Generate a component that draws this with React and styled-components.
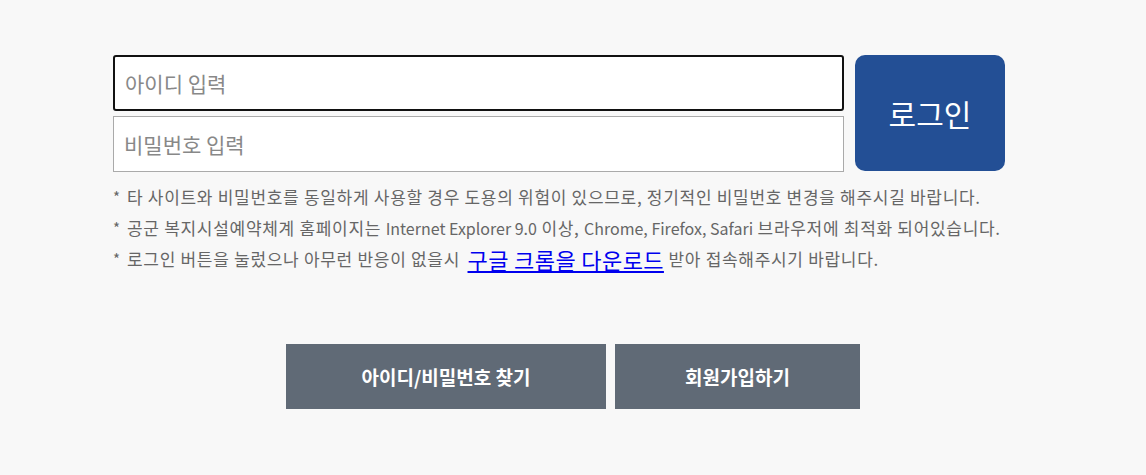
import styled, { createGlobalStyle } from "styled-components";

const GlobalStyle = createGlobalStyle`
  html, body {
    margin: 0;
    padding: 0;
    background: #f8f8f8;
    font-family: "Noto Sans CJK KR", "Noto Sans", sans-serif;
  }
`;

const Page = styled.div`
  width: 920px;
  margin: 0 auto;
  padding-top: 55px;
`;

const LoginRow = styled.div`
  display: flex;
  width: 892px;
  gap: 11px;
`;

const Fields = styled.div`
  flex: 1;
  display: flex;
  flex-direction: column;
  gap: 5px;
`;

const Input = styled.input`
  box-sizing: border-box;
  width: 100%;
  height: 56px;
  padding: 0 10px;
  font-family: inherit;
  font-size: 21px;
  color: #333;
  background: #fff;
  border: ${(p) => (p.$focused ? "2px solid #111" : "1px solid #aaa")};
  border-radius: ${(p) => (p.$focused ? "3px" : "0")};
  outline: none;
  &::placeholder {
    color: #888;
  }
`;

const LoginButton = styled.button`
  width: 150px;
  height: 116px;
  border: none;
  border-radius: 10px;
  background: #234f95;
  color: #fff;
  font-family: inherit;
  font-size: 30px;
  cursor: pointer;
`;

const Notes = styled.ul`
  list-style: none;
  margin: 9px 0 0;
  padding: 0;
  color: #666;
  font-size: 17px;
  letter-spacing: 0.7px;
`;

const Note = styled.li`
  height: 31px;
  display: flex;
  align-items: center;
  white-space: pre;
  &::before {
    content: "*";
    width: 14px;
    letter-spacing: 0;
    font-size: 15px;
  }
`;

const Latin = styled.span`
  font-size: 16px;
  letter-spacing: 0;
`;

const Link = styled.a`
  color: #0000ee;
  font-size: 22px;
  letter-spacing: 0.4px;
  text-decoration: underline;
  margin-left: 3px;
`;

const BottomRow = styled.div`
  display: flex;
  justify-content: center;
  gap: 9px;
  margin-top: 70px;
`;

const GrayButton = styled.button`
  width: ${(p) => p.$w}px;
  height: 65px;
  border: none;
  background: #606a76;
  color: #fff;
  font-family: inherit;
  font-size: 19px;
  font-weight: bold;
  cursor: pointer;
`;

export default function App() {
  return (
    <>
      <GlobalStyle />
      <Page>
        <LoginRow>
          <Fields>
            <Input $focused placeholder="아이디 입력" />
            <Input type="password" placeholder="비밀번호 입력" />
          </Fields>
          <LoginButton>로그인</LoginButton>
        </LoginRow>
        <Notes>
          <Note>타 사이트와 비밀번호를 동일하게 사용할 경우 도용의 위험이 있으므로, 정기적인 비밀번호 변경을 해주시길 바랍니다.</Note>
          <Note>
            {"공군 복지시설예약체계 홈페이지는 "}
            <Latin>Internet Explorer 9.0</Latin>
            {" 이상, "}
            <Latin>Chrome, Firefox, Safari</Latin>
            {" 브라우저에 최적화 되어있습니다."}
          </Note>
          <Note>
            {"로그인 버튼을 눌렀으나 아무런 반응이 없을시 "}
            <Link href="#">구글 크롬을 다운로드</Link>
            {" 받아 접속해주시기 바랍니다."}
          </Note>
        </Notes>
      </Page>
      <BottomRow>
        <GrayButton $w={320}>아이디/비밀번호 찾기</GrayButton>
        <GrayButton $w={245}>회원가입하기</GrayButton>
      </BottomRow>
    </>
  );
}
